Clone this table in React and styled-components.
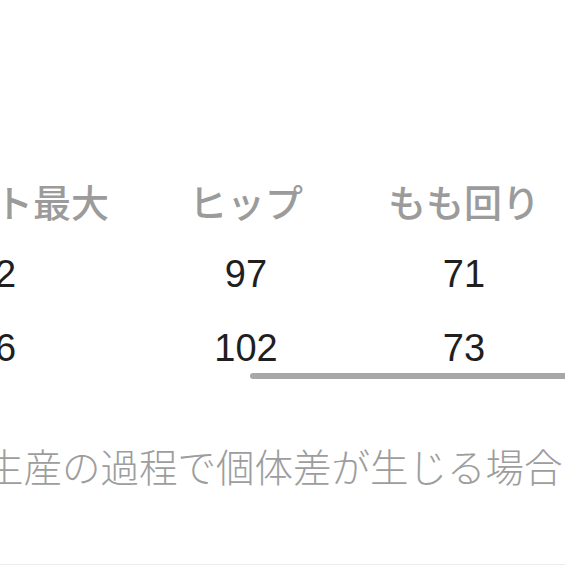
import React from 'react';
import styled, { createGlobalStyle } from 'styled-components';

const GlobalStyle = createGlobalStyle`
  html, body {
    margin: 0;
    padding: 0;
    background: #fff;
  }
  body {
    font-family: "Liberation Sans", "Noto Sans CJK JP", sans-serif;
    overflow: hidden;
  }
`;

const sizes = {
  headers: ['ウエスト最大', 'ヒップ', 'もも回り', '股上'],
  rows: [
    ['82', '97', '71', '29'],
    ['86', '102', '73', '30'],
  ],
};

function App() {
  return (
    <Page>
      <GlobalStyle />
      <ScrollArea>
        <Table>
          {sizes.headers.map((h) => (
            <HeadCell key={h}>{h}</HeadCell>
          ))}
          {sizes.rows.map((row, i) =>
            row.map((v, j) => <Cell key={`${i}-${j}`}>{v}</Cell>)
          )}
        </Table>
        <ScrollIndicator />
      </ScrollArea>
      <Note>生産の過程で個体差が生じる場合があります。</Note>
    </Page>
  );
}

const Page = styled.div`
  height: 565px;
  box-sizing: border-box;
  border-bottom: 1px solid #ececec;
  overflow: hidden;
  padding-top: 163px;
`;

const ScrollArea = styled.div`
  position: relative;
  overflow: hidden;
  height: 222px;
`;

const Table = styled.div`
  display: grid;
  grid-template-columns: 300px 202px 234px 200px;
  grid-auto-rows: 74px;
  margin-left: -155px;
  width: max-content;
`;

const HeadCell = styled.div`
  display: flex;
  align-items: center;
  justify-content: center;
  font-family: "Noto Sans CJK JP", sans-serif;
  font-weight: 500;
  font-size: 38px;
  color: #9b9b9b;
  white-space: nowrap;
`;

const Cell = styled.div`
  display: flex;
  align-items: center;
  justify-content: center;
  font-size: 38px;
  color: #1f1f1f;
  white-space: nowrap;
`;

const ScrollIndicator = styled.div`
  position: absolute;
  left: 250px;
  top: 210px;
  width: 400px;
  height: 6px;
  border-radius: 3px;
  background: #a7a7a7;
`;

const Note = styled.p`
  margin: 54px 0 0 -15px;
  font-family: "Noto Sans CJK JP", sans-serif;
  font-weight: 300;
  font-size: 38.5px;
  line-height: 52px;
  color: #9d9d9d;
  white-space: nowrap;
`;

export default App;
